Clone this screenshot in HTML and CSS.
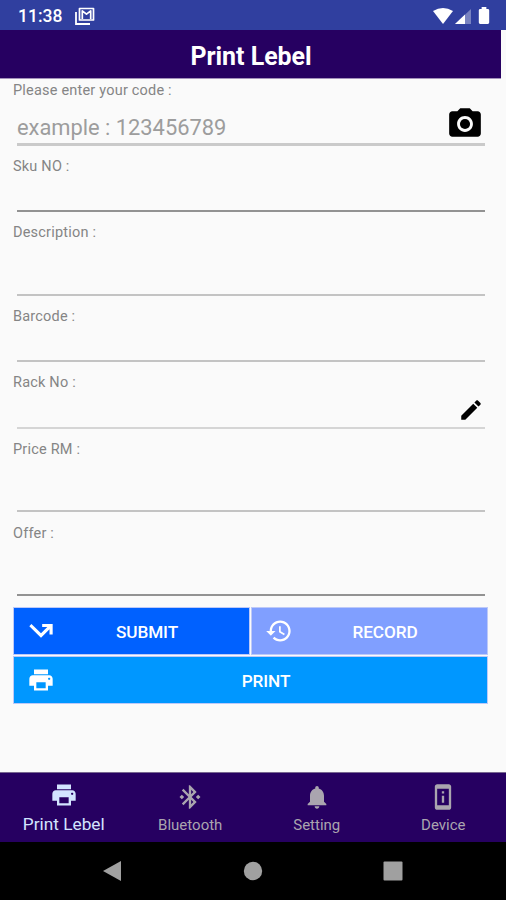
FILE: index.html
```html
<!DOCTYPE html>
<html lang="en">
<head>
<meta charset="utf-8">
<title>Print Lebel</title>
<link rel="stylesheet" href="styles.css">
</head>
<body>
<svg class="defs" width="0" height="0" aria-hidden="true">
  <symbol id="printer" viewBox="0 0 24 24"><path d="M19 8H5c-1.660 0-3 1.340-3 3v6h4v4h12v-4h4v-6c0-1.660-1.340-3-3-3zm-3 11H8v-5h8v5zm3-7c-.55 0-1-.45-1-1s.45-1 1-1 1 .45 1 1-.45 1-1 1zm-1-9H6v4h12V3z"/></symbol>
</svg>
<div class="status">
  <span class="time">11:38</span>
  <svg class="mail" viewBox="0 0 20 18"><path class="outline" d="M2 4v12h14"/><path class="frame" d="M4.500 1.500h14v11.500h-14z"/><path class="letter" d="M7.300 12V3.800l4.200 3.400 4.200-3.400V12"/></svg>
  <svg class="wifi" viewBox="0 0 20 16"><path d="M0 3Q10-3 20 3L10 16z"/></svg>
  <svg class="signal" viewBox="0 0 16 15"><path class="dim" d="M16 0v15H0z"/><path d="M10 5.600V15H0z"/></svg>
  <svg class="battery" viewBox="0 0 12 18"><path d="M3.500 0h5v2H10q1.500 0 1.500 1.500v13Q11.500 18 10 18H2Q.5 18 .5 16.500v-13Q.5 2 2 2h1.500z"/></svg>
</div>
<header class="title">Print Lebel</header>
<main class="form">
  <div class="field code"><span class="label">Please enter your code :</span><div class="input"><span class="hint">example : 123456789</span><svg class="camera" viewBox="0 0 24 24"><path d="M9 2L7.170 4H4c-1.100 0-2 .9-2 2v12c0 1.100.9 2 2 2h16c1.100 0 2-.9 2-2V6c0-1.100-.9-2-2-2h-3.170L15 2H9zm3 15c-2.760 0-5-2.240-5-5s2.240-5 5-5 5 2.240 5 5-2.240 5-5 5z"/><circle cx="12" cy="12" r="3.200"/></svg></div></div>
  <div class="field sku"><span class="label">Sku NO :</span><div class="input"></div></div>
  <div class="field tall"><span class="label">Description :</span><div class="input"></div></div>
  <div class="field barcode"><span class="label">Barcode :</span><div class="input"></div></div>
  <div class="field rack"><span class="label">Rack No :</span><div class="input"><svg class="pencil" viewBox="0 0 24 24"><path d="M3 17.250V21h3.750L17.810 9.940l-3.750-3.750L3 17.250zM20.710 7.040c.39-.39.39-1.020 0-1.410l-2.340-2.340c-.39-.39-1.020-.39-1.410 0l-1.830 1.830 3.750 3.750 1.830-1.830z"/></svg></div></div>
  <div class="field tall price"><span class="label">Price RM :</span><div class="input"></div></div>
  <div class="field tall offer"><span class="label">Offer :</span><div class="input"></div></div>
  <div class="buttons">
    <button class="btn submit"><svg viewBox="0 0 24 24"><path d="M2 8l10 9.800 7.300-7.200V15H22V6h-9v2.600h4.400L12 14 3.800 6z"/></svg><span>SUBMIT</span></button>
    <button class="btn record"><svg viewBox="0 0 24 24"><path d="M13 3c-4.970 0-9 4.030-9 9H1l3.890 3.890.07.14L9 12H6c0-3.870 3.130-7 7-7s7 3.130 7 7-3.130 7-7 7c-1.930 0-3.680-.79-4.940-2.060l-1.420 1.420C8.270 19.990 10.510 21 13 21c4.970 0 9-4.030 9-9s-4.030-9-9-9zm-1 5v5l4.280 2.540.72-1.210-3.500-2.080V8H12z"/></svg><span>RECORD</span></button>
    <button class="btn print"><svg><use href="#printer"/></svg><span>PRINT</span></button>
  </div>
</main>
<nav class="tabs">
  <a class="tab active"><svg><use href="#printer"/></svg><span>Print Lebel</span></a>
  <a class="tab"><svg viewBox="0 0 24 24"><path d="M7 12l-2-2-2 2 2 2 2-2zm10.710-4.290L12 2h-1v7.590L6.410 5 5 6.410 10.590 12 5 17.590 6.410 19 11 14.410V22h1l5.710-5.710-4.300-4.290 4.300-4.290zM13 5.830l1.880 1.880L13 9.590V5.830zm1.880 10.460L13 18.170v-3.760l1.880 1.880zM19 10l-2 2 2 2 2-2-2-2z"/></svg><span>Bluetooth</span></a>
  <a class="tab"><svg viewBox="0 0 24 24"><path d="M12 22c1.100 0 2-.9 2-2h-4c0 1.100.89 2 2 2zm6-6v-5c0-3.070-1.640-5.640-4.500-6.320V4c0-.83-.67-1.500-1.500-1.500s-1.500.67-1.500 1.500v.68C7.630 5.360 6 7.920 6 11v5l-2 2v1h16v-1l-2-2z"/></svg><span>Setting</span></a>
  <a class="tab"><svg viewBox="0 0 24 24"><path d="M11 9h2V7h-2v2zm0 8h2v-6h-2v6zM17 1H7c-1.100 0-2 .9-2 2v18c0 1.100.9 2 2 2h10c1.100 0 2-.9 2-2V3c0-1.100-.9-2-2-2zm0 18H7V5h10v14z"/></svg><span>Device</span></a>
</nav>
<footer class="system">
  <svg viewBox="0 0 20 22"><path d="M19 1v20L1 11z"/></svg>
  <svg viewBox="0 0 20 22"><circle cx="10" cy="11" r="9.200"/></svg>
  <svg viewBox="0 0 20 22"><rect x=".5" y="1.500" width="19" height="19" rx="1"/></svg>
</footer>
</body>
</html>
```
FILE: styles.css
```css
* { box-sizing: border-box; }
body { margin: 0; width: 506px; height: 900px; display: flex; flex-direction: column; overflow: hidden; background: #fafafa; font-family: Roboto, "Liberation Sans", sans-serif; }
svg { display: block; fill: currentColor; flex: none; }
.defs { height: 0; }
.status { height: 30px; flex: none; display: flex; align-items: center; padding: 1px 16px 0 18px; background: #303f9f; color: #fff; }
.time { font-size: 17.500px; font-weight: 500; width: 57px; }
.mail { width: 20px; height: 18px; }
.outline { fill: none; stroke: currentColor; stroke-width: 1.800; transform: translate(-1px, 1px); }
.frame, .letter { fill: none; stroke: currentColor; stroke-width: 1.700; stroke-linejoin: round; }
.wifi { width: 20px; height: 16px; margin-left: auto; }
.signal { width: 16px; height: 15px; margin: 1px 7px 0 2px; }
.dim { opacity: .35; }
.battery { width: 12px; height: 17px; }
.title { height: 49px; flex: none; width: 501px; background: #260061; border-bottom: 1px solid #a391bb; color: #fff; font-size: 24.900px; font-weight: 700; line-height: 53px; text-align: center; padding-left: 1px; }
.form { flex: 1; padding: 3px 17px 0 13px; min-height: 0; }
.field { display: flex; flex-direction: column; height: 66px; padding-bottom: 12px; }
.label { height: 18px; line-height: 18px; font-size: 14.500px; color: #858585; letter-spacing: .2px; white-space: nowrap; }
.input { flex: 1; display: flex; align-items: center; margin: 0 4px 0 4px; border-bottom: 2px solid #c3c3c3; }
.code { height: 76px; padding-bottom: 12px; }
.code .input { border-bottom: 3px solid #cacaca; }
.sku .input, .offer .input { border-bottom-color: #929292; }
.tall { height: 84px; }
.rack { height: 67px; }
.rack .input { border-bottom-color: #d5d5d5; }
.price { padding-bottom: 13px; }
.offer { padding-bottom: 11px; height: 82px; }
.hint { font-size: 21.900px; line-height: 24px; color: #9d9d9d; padding: 13px 0 0 0; letter-spacing: -.02px; }
.camera { width: 38px; height: 38px; margin: 5px 1px 0 auto; }
.pencil { width: 26px; height: 26px; margin: 1px 1px 0 auto; }
.buttons { display: grid; grid-template-columns: 237px 237px; gap: 1px; margin-left: 0; }
.btn { height: 48px; display: flex; align-items: center; padding: 0 0 0 13px; border: 1px solid #bdc9f8; border-radius: 0; color: #fff; font: 500 17.200px Roboto, sans-serif; }
.btn svg { width: 28px; height: 28px; }
.btn span { flex: 1; text-align: center; padding: 1px 10px 0 0; letter-spacing: -.1px; }
.submit { background: #0061ff; }
.record { background: #809fff; }
.print { grid-column: 1 / 3; background: #0097ff; }
.tabs { height: 70px; flex: none; display: grid; grid-template-columns: repeat(4, 1fr); background: #260061; border-top: 1px solid #776690; color: #aaa5af; }
.tab { display: flex; flex-direction: column; align-items: center; padding: 10px 0 0 1px; font-size: 15px; line-height: 20px; }
.tab svg { width: 28px; height: 28px; margin-bottom: 4px; }
.tab.active { color: #d3e4ff; font-size: 17.300px; padding-top: 8px; }
.tab.active svg { margin-bottom: 5px; }
.system { height: 58px; flex: none; display: flex; justify-content: space-between; padding: 18px 103px 0 102px; background: #000; color: #a0a0a0; }
.system svg { width: 20px; height: 22px; }
```
